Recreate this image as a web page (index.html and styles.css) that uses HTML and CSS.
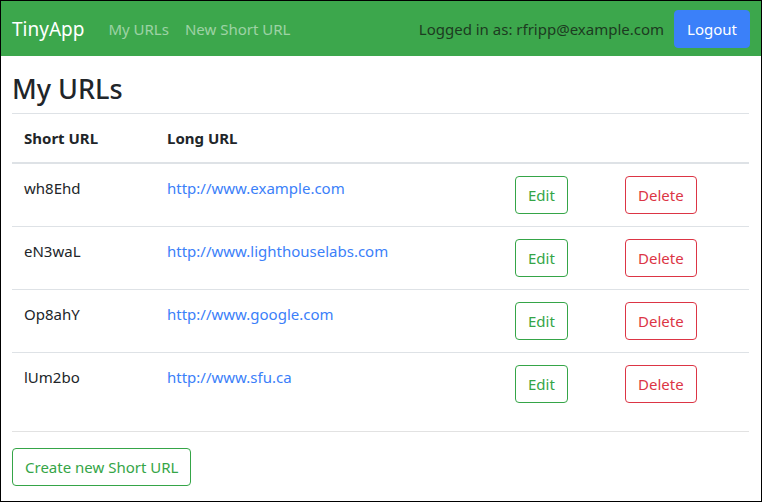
FILE: index.html
```html
<!DOCTYPE html>
<html lang="en">
<head>
<meta charset="utf-8">
<title>TinyApp</title>
<link rel="stylesheet" href="styles.css">
</head>
<body>
<nav class="navbar">
  <a class="brand" href="#">TinyApp</a>
  <div class="nav-links">
    <a class="nav-link" href="#">My URLs</a>
    <a class="nav-link" href="#">New Short URL</a>
  </div>
  <div class="nav-right">
    <span class="user">Logged in as: rfripp@example.com</span>
    <button class="btn btn-primary">Logout</button>
  </div>
</nav>
<main class="container">
  <h3 class="title">My URLs</h3>
  <table class="table">
    <thead>
      <tr>
        <th class="col-short">Short URL</th>
        <th class="col-long">Long URL</th>
        <th class="col-edit"></th>
        <th class="col-delete"></th>
      </tr>
    </thead>
    <tbody>
      <tr>
        <td>wh8Ehd</td>
        <td><a href="#">http://www.example.com</a></td>
        <td><button class="btn btn-outline-success">Edit</button></td>
        <td><button class="btn btn-outline-danger">Delete</button></td>
      </tr>
      <tr>
        <td>eN3waL</td>
        <td><a href="#">http://www.lighthouselabs.com</a></td>
        <td><button class="btn btn-outline-success">Edit</button></td>
        <td><button class="btn btn-outline-danger">Delete</button></td>
      </tr>
      <tr>
        <td>Op8ahY</td>
        <td><a href="#">http://www.google.com</a></td>
        <td><button class="btn btn-outline-success">Edit</button></td>
        <td><button class="btn btn-outline-danger">Delete</button></td>
      </tr>
      <tr>
        <td>lUm2bo</td>
        <td><a href="#">http://www.sfu.ca</a></td>
        <td><button class="btn btn-outline-success">Edit</button></td>
        <td><button class="btn btn-outline-danger">Delete</button></td>
      </tr>
    </tbody>
  </table>
  <hr class="divider">
  <button class="btn btn-outline-success">Create new Short URL</button>
</main>
</body>
</html>
```
FILE: styles.css
```css
* {
  box-sizing: border-box;
}

html, body {
  height: 100%;
}

body {
  margin: 0;
  border: 1px solid #000;
  font-family: "Noto Sans", "Open Sans", sans-serif;
  font-size: 15px;
  line-height: 24px;
  color: #212529;
  background: #fff;
  overflow: hidden;
}

.navbar {
  display: flex;
  align-items: center;
  height: 55px;
  padding: 0 11px 0 11px;
  background: #3ca74c;
}

.brand {
  font-size: 19px;
  line-height: 30px;
  color: #fff;
  text-decoration: none;
  margin-right: 16px;
}

.nav-links {
  display: flex;
}

.nav-link {
  padding: 8px;
  color: rgba(255, 255, 255, 0.5);
  text-decoration: none;
}

.nav-right {
  margin-left: auto;
  display: flex;
  align-items: center;
  gap: 10px;
}

.user {
  color: #1d3b21;
}

.btn {
  font-family: inherit;
  font-size: 15px;
  line-height: 24px;
  padding: 6px 12px;
  border: 1px solid transparent;
  border-radius: 4px;
  background: transparent;
  cursor: pointer;
}

.btn-primary {
  background: #3b80f9;
  border-color: #3b80f9;
  color: #fff;
}

.btn-outline-success {
  border-color: #35a547;
  color: #35a547;
}

.btn-outline-danger {
  border-color: #dc3545;
  color: #dc3545;
}

.container {
  padding: 16px 12px 0 11px;
}

.title {
  margin: 0 0 8px;
  font-size: 27px;
  line-height: 33px;
  font-weight: 500;
}

.table {
  width: 100%;
  border-collapse: collapse;
  margin-bottom: 16px;
}

.table th,
.table td {
  padding: 12px;
  text-align: left;
  vertical-align: top;
  border-top: 1px solid #dee2e6;
}

.table thead th {
  border-bottom: 2px solid #dee2e6;
  font-weight: 700;
}

.col-short { width: 143px; }
.col-long { width: 348px; }
.col-edit { width: 110px; }
.col-delete { width: 136px; }

.table a {
  color: #3b80f9;
  text-decoration: none;
}

.divider {
  margin: 0 0 16px;
  border: 0;
  border-top: 1px solid #e2e2e2;
}
```
